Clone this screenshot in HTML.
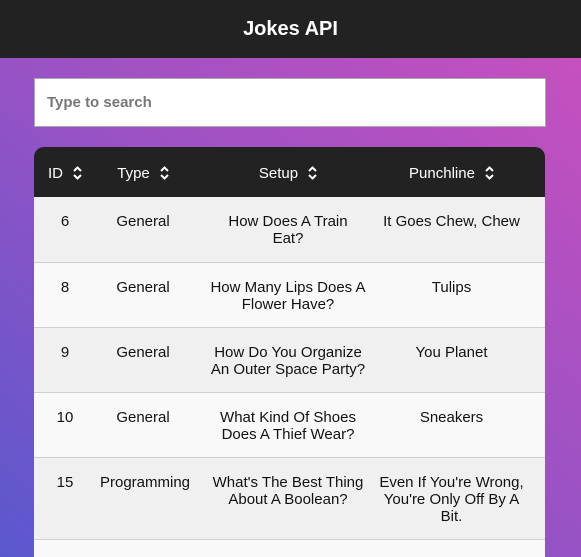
<!DOCTYPE html>
<html><head><style>
*{box-sizing:border-box;margin:0;padding:0}
html,body{width:581px;height:557px;overflow:hidden}
body{font-family:"Liberation Sans",Arial,sans-serif;background:linear-gradient(40deg,#5a58cd 0%,#9a52c4 50%,#cc4fbe 100%);position:relative}
.hdr{height:58px;background:#222;color:#fff;font-weight:bold;font-size:20px;text-align:center;line-height:58px}
.search{position:absolute;left:34px;top:78px;width:512px;height:49px;background:#fff;border:1px solid #aaa;padding-left:12px;line-height:48px;font-weight:bold;font-size:15px;color:#777}
table{position:absolute;left:34px;top:147px;width:511px;border-collapse:collapse;font-size:15px;color:#111;table-layout:fixed}
thead th{background:#222;color:#fff;font-weight:normal;height:50px;white-space:nowrap;padding-top:2px}
thead th:first-child{border-top-left-radius:10px}
thead th:last-child{border-top-right-radius:10px}
td{text-align:center;vertical-align:top;padding:16px 4px 0;line-height:17px;border-bottom:1px solid #d0d0d0}
td:nth-child(3),th:nth-child(3){padding-left:20px;padding-right:10px}
td:nth-child(4),th:nth-child(4){padding-left:2px;padding-right:20px}
tbody tr:nth-child(odd) td{background:#f0f0f0}
tbody tr:nth-child(even) td{background:#f9f9f9}
.s{display:inline-block;margin-left:10px;vertical-align:-3px}
</style></head><body>
<div class="hdr">Jokes API</div>
<div class="search">Type to search</div>
<table>
<colgroup><col style="width:62px"><col style="width:94px"><col style="width:186px"><col style="width:169px"></colgroup>
<thead><tr>
<th>ID<svg class="s" width="9" height="16" viewBox="0 0 9 16"><path d="M1 6L4.5 2.5L8 6M1 10L4.5 13.5L8 10" stroke="#fff" stroke-width="2" fill="none"/></svg></th>
<th>Type<svg class="s" width="9" height="16" viewBox="0 0 9 16"><path d="M1 6L4.5 2.5L8 6M1 10L4.5 13.5L8 10" stroke="#fff" stroke-width="2" fill="none"/></svg></th>
<th>Setup<svg class="s" width="9" height="16" viewBox="0 0 9 16"><path d="M1 6L4.5 2.5L8 6M1 10L4.5 13.5L8 10" stroke="#fff" stroke-width="2" fill="none"/></svg></th>
<th>Punchline<svg class="s" width="9" height="16" viewBox="0 0 9 16"><path d="M1 6L4.5 2.5L8 6M1 10L4.5 13.5L8 10" stroke="#fff" stroke-width="2" fill="none"/></svg></th>
</tr></thead>
<tbody>
<tr style="height:65px"><td>6</td><td>General</td><td>How Does A Train<br>Eat?</td><td>It Goes Chew, Chew</td></tr>
<tr style="height:65px"><td>8</td><td>General</td><td>How Many Lips Does A Flower Have?</td><td>Tulips</td></tr>
<tr style="height:65px"><td>9</td><td>General</td><td>How Do You Organize An Outer Space Party?</td><td>You Planet</td></tr>
<tr style="height:65px"><td>10</td><td>General</td><td>What Kind Of Shoes Does A Thief Wear?</td><td>Sneakers</td></tr>
<tr style="height:82px"><td>15</td><td>Programming</td><td>What's The Best Thing About A Boolean?</td><td>Even If You're Wrong,<br>You're Only Off By A<br>Bit.</td></tr>
<tr style="height:18px"><td style="padding:0"></td><td style="padding:0"></td><td style="padding:0"></td><td style="padding:0"></td></tr>
</tbody></table>
</body></html>
